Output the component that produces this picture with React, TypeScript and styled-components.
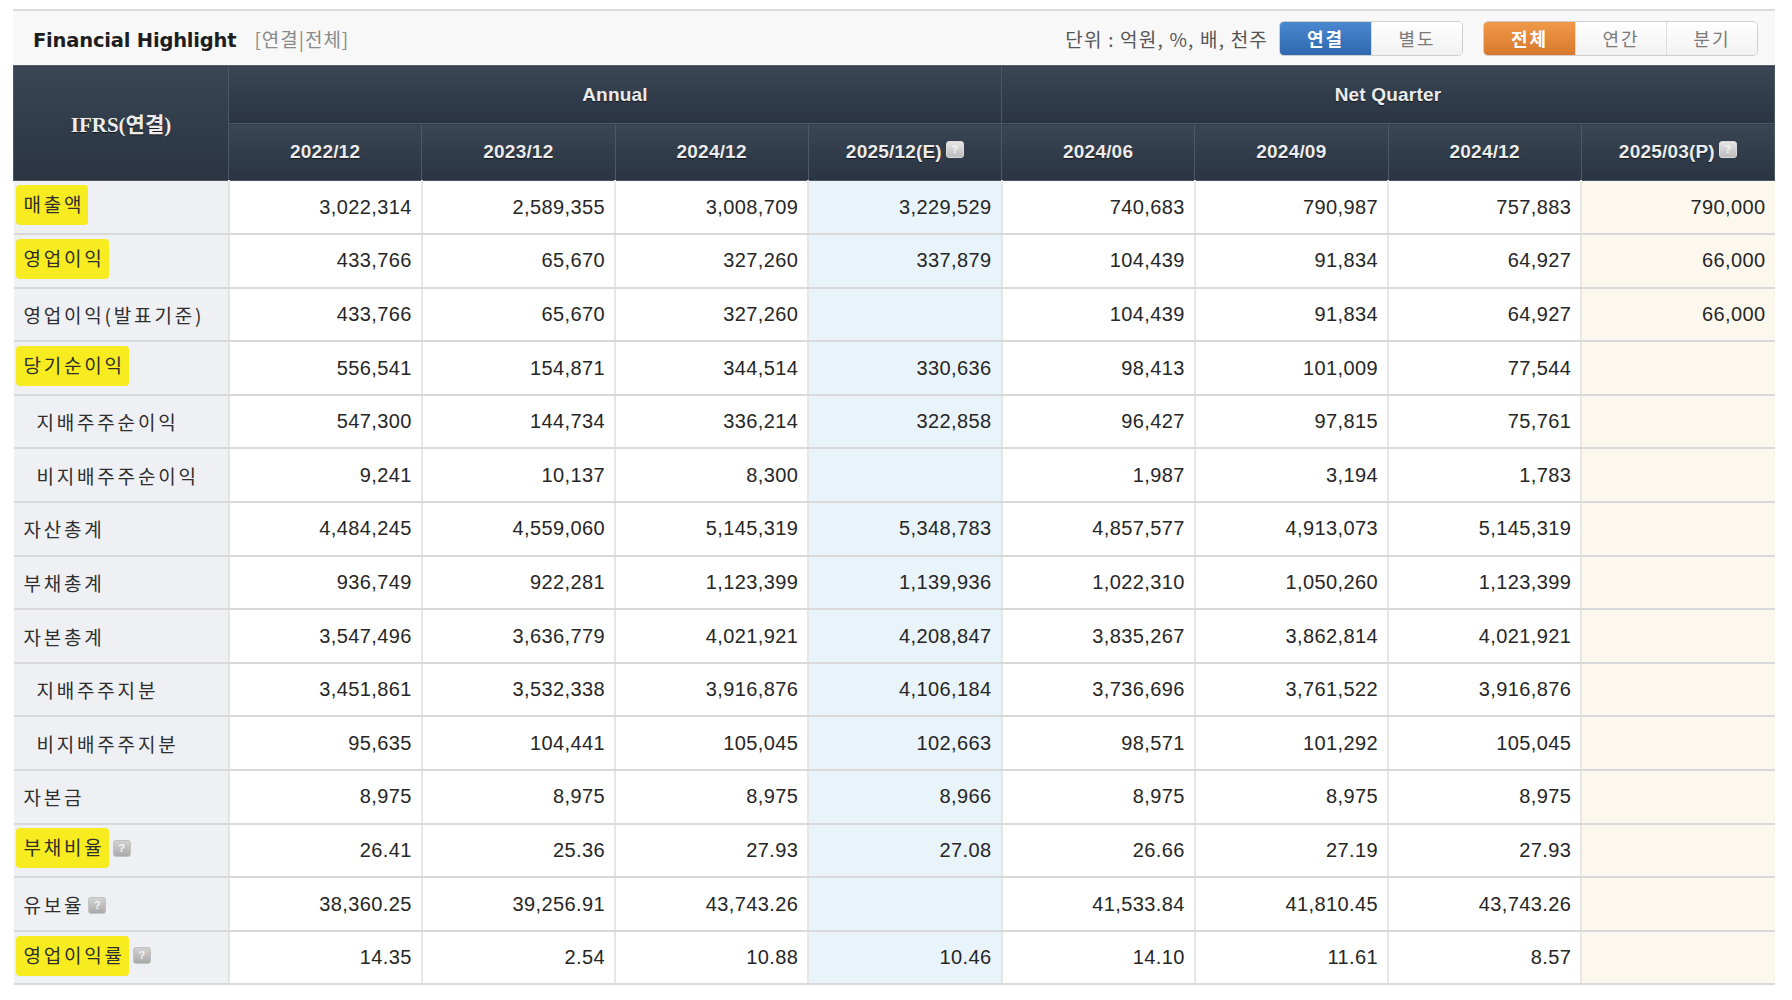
import React from 'react';
import styled, { createGlobalStyle } from 'styled-components';

const GlobalStyle = createGlobalStyle`
	html, body {
		margin: 0;
		padding: 0;
		background: #ffffff;
	}
	body {
		font-family: 'Liberation Sans', 'Noto Sans CJK KR', sans-serif;
	}
`;

const Page = styled.div`
	width: 1762px;
	padding: 9px 17px 0 13px;
`;

const TitleBar = styled.div`
	height: 54px;
	border-top: 2px solid #dcdcdc;
	background: #f8f8f8;
	display: flex;
	align-items: center;
	justify-content: space-between;
	padding: 0 17px 0 20px;
`;

const TitleGroup = styled.div`
	display: flex;
	align-items: baseline;
	gap: 18px;
`;

const Title = styled.h2`
	margin: 0;
	font-family: 'DejaVu Sans', 'Liberation Sans', sans-serif;
	font-size: 19.5px;
	font-weight: bold;
	letter-spacing: -0.2px;
	color: #1e1e1e;
`;

const SubTitle = styled.span`
	font-family: 'Noto Sans CJK KR', sans-serif;
	font-size: 19px;
	color: #8a8a8a;
	letter-spacing: 1px;
`;

const Controls = styled.div`
	display: flex;
	align-items: center;
`;

const Unit = styled.span`
	font-family: 'Noto Sans CJK KR', sans-serif;
	font-size: 19px;
	letter-spacing: 1.2px;
	color: #555;
	margin-right: 11px;
`;

const ButtonGroup = styled.div`
	display: flex;
	border-radius: 5px;
	overflow: hidden;
	border: 1px solid #cfcfcf;
	& + & {
		margin-left: 20px;
	}
`;

const ToggleButton = styled.button<{ $active?: 'blue' | 'orange' }>`
	width: 91px;
	height: 33px;
	border: none;
	border-left: 1px solid #dedede;
	&:first-child {
		border-left: none;
	}
	font-family: 'Noto Sans CJK KR', sans-serif;
	font-size: 18px;
	letter-spacing: 2px;
	font-weight: ${(p) => (p.$active ? 'bold' : 'normal')};
	color: ${(p) => (p.$active ? '#ffffff' : '#7a7a7a')};
	background: ${(p) =>
		p.$active === 'blue'
			? 'linear-gradient(#4a88cf, #2f68ae)'
			: p.$active === 'orange'
			? 'linear-gradient(#f09a48, #d8782c)'
			: 'linear-gradient(#ffffff, #f2f2f2)'};
	padding: 0;
`;

const Table = styled.table`
	width: 1762px;
	border-collapse: collapse;
	table-layout: fixed;
`;

const HeadCell = styled.th<{ $h: number }>`
	height: ${(p) => p.$h}px;
	padding: 0;
	background: linear-gradient(#3a4655, #2a3442);
	border: 1px solid #4d5867;
	border-top-color: #5a6472;
	color: #ececec;
	font-family: 'Liberation Sans', 'Noto Sans CJK KR', sans-serif;
	font-size: 19px;
	font-weight: bold;
	letter-spacing: 0.2px;
	text-shadow: 0 1px 1px rgba(0, 0, 0, 0.6);
	white-space: nowrap;
`;

const CornerCell = styled(HeadCell)`
	font-family: 'Liberation Serif', 'Noto Sans CJK KR', serif;
	font-size: 21px;
	letter-spacing: 0;
`;

const Row = styled.tr`
	height: 53.6px;
`;

const LabelCell = styled.td<{ $indent?: boolean }>`
	padding: 0 0 0 ${(p) => (p.$indent ? 23 : 10)}px;
	background: #eef0f4;
	border-bottom: 2px solid #d9d9d9;
	border-right: 2px solid #e2e4e8;
	font-family: 'Noto Sans CJK KR', sans-serif;
	font-size: 19px;
	letter-spacing: 2.8px;
	color: #2e2e2e;
	white-space: nowrap;
`;

const Marker = styled.span`
	display: inline-block;
	background: #f7ec1f;
	border-radius: 4px;
	padding: 9px 4px 11px 8px;
	margin: -4px 0 0 -8px;
	line-height: 20px;
	vertical-align: middle;
`;

const ValueCell = styled.td<{ $tone?: 'estimate' | 'preview' }>`
	padding: 0 9px 0 0;
	text-align: right;
	background: ${(p) =>
		p.$tone === 'estimate' ? '#e9f3fa' : p.$tone === 'preview' ? '#fcf8ee' : '#ffffff'};
	border-bottom: 2px solid #d9d9d9;
	border-right: 2px solid #e6e6e6;
	font-family: 'Liberation Sans', sans-serif;
	font-size: 20px;
	letter-spacing: 0.4px;
	color: #262626;
	&:last-child {
		border-right: none;
	}
`;

const Help = styled.span<{ $light?: boolean }>`
	display: inline-block;
	width: 18px;
	height: 17px;
	margin-left: 4px;
	border-radius: 3px;
	vertical-align: ${(p) => (p.$light ? '5px' : 'middle')};
	position: relative;
	top: ${(p) => (p.$light ? 0 : -2)}px;
	background: ${(p) =>
		p.$light ? 'linear-gradient(#e6e6e6, #bcbcbc)' : 'linear-gradient(#d2d2d2, #aaaaaa)'};
	border: 1px solid ${(p) => (p.$light ? '#dadada' : '#c2c2c2')};
	box-sizing: border-box;
	color: #f4f4f4;
	font-family: 'Liberation Sans', sans-serif;
	font-size: 11px;
	font-weight: bold;
	line-height: 15px;
	text-align: center;
	text-shadow: none;
	letter-spacing: 0;
`;

type RowData = {
	label: string;
	mark?: boolean;
	indent?: boolean;
	help?: boolean;
	values: string[];
};

const rows: RowData[] = [
	{ label: '매출액', mark: true, values: ['3,022,314', '2,589,355', '3,008,709', '3,229,529', '740,683', '790,987', '757,883', '790,000'] },
	{ label: '영업이익', mark: true, values: ['433,766', '65,670', '327,260', '337,879', '104,439', '91,834', '64,927', '66,000'] },
	{ label: '영업이익(발표기준)', values: ['433,766', '65,670', '327,260', '', '104,439', '91,834', '64,927', '66,000'] },
	{ label: '당기순이익', mark: true, values: ['556,541', '154,871', '344,514', '330,636', '98,413', '101,009', '77,544', ''] },
	{ label: '지배주주순이익', indent: true, values: ['547,300', '144,734', '336,214', '322,858', '96,427', '97,815', '75,761', ''] },
	{ label: '비지배주주순이익', indent: true, values: ['9,241', '10,137', '8,300', '', '1,987', '3,194', '1,783', ''] },
	{ label: '자산총계', values: ['4,484,245', '4,559,060', '5,145,319', '5,348,783', '4,857,577', '4,913,073', '5,145,319', ''] },
	{ label: '부채총계', values: ['936,749', '922,281', '1,123,399', '1,139,936', '1,022,310', '1,050,260', '1,123,399', ''] },
	{ label: '자본총계', values: ['3,547,496', '3,636,779', '4,021,921', '4,208,847', '3,835,267', '3,862,814', '4,021,921', ''] },
	{ label: '지배주주지분', indent: true, values: ['3,451,861', '3,532,338', '3,916,876', '4,106,184', '3,736,696', '3,761,522', '3,916,876', ''] },
	{ label: '비지배주주지분', indent: true, values: ['95,635', '104,441', '105,045', '102,663', '98,571', '101,292', '105,045', ''] },
	{ label: '자본금', values: ['8,975', '8,975', '8,975', '8,966', '8,975', '8,975', '8,975', ''] },
	{ label: '부채비율', mark: true, help: true, values: ['26.41', '25.36', '27.93', '27.08', '26.66', '27.19', '27.93', ''] },
	{ label: '유보율', help: true, values: ['38,360.25', '39,256.91', '43,743.26', '', '41,533.84', '41,810.45', '43,743.26', ''] },
	{ label: '영업이익률', mark: true, help: true, values: ['14.35', '2.54', '10.88', '10.46', '14.10', '11.61', '8.57', ''] },
];

const periods = [
	{ label: '2022/12' },
	{ label: '2023/12' },
	{ label: '2024/12' },
	{ label: '2025/12(E)', help: true },
	{ label: '2024/06' },
	{ label: '2024/09' },
	{ label: '2024/12' },
	{ label: '2025/03(P)', help: true },
];

const toneFor = (i: number) => (i === 3 ? 'estimate' : i === 7 ? 'preview' : undefined);

const App = () => {
	return (
		<Page>
			<GlobalStyle />
			<TitleBar>
				<TitleGroup>
					<Title>Financial Highlight</Title>
					<SubTitle>[연결|전체]</SubTitle>
				</TitleGroup>
				<Controls>
					<Unit>단위 : 억원, %, 배, 천주</Unit>
					<ButtonGroup>
						<ToggleButton $active="blue">연결</ToggleButton>
						<ToggleButton>별도</ToggleButton>
					</ButtonGroup>
					<ButtonGroup>
						<ToggleButton $active="orange">전체</ToggleButton>
						<ToggleButton>연간</ToggleButton>
						<ToggleButton>분기</ToggleButton>
					</ButtonGroup>
				</Controls>
			</TitleBar>
			<Table>
				<colgroup>
					<col style={{ width: 215 }} />
					{periods.map((_, i) => (
						<col key={i} />
					))}
				</colgroup>
				<thead>
					<tr>
						<CornerCell $h={57} rowSpan={2}>
							IFRS(연결)
						</CornerCell>
						<HeadCell $h={57} colSpan={4}>
							Annual
						</HeadCell>
						<HeadCell $h={57} colSpan={4}>
							Net Quarter
						</HeadCell>
					</tr>
					<tr>
						{periods.map((p, i) => (
							<HeadCell $h={56} key={i}>
								{p.label}
								{p.help && <Help $light>?</Help>}
							</HeadCell>
						))}
					</tr>
				</thead>
				<tbody>
					{rows.map((r) => (
						<Row key={r.label}>
							<LabelCell $indent={r.indent}>
								{r.mark ? <Marker>{r.label}</Marker> : r.label}
								{r.help && <Help>?</Help>}
							</LabelCell>
							{r.values.map((v, i) => (
								<ValueCell key={i} $tone={toneFor(i)}>
									{v}
								</ValueCell>
							))}
						</Row>
					))}
				</tbody>
			</Table>
		</Page>
	);
};

export default App;
